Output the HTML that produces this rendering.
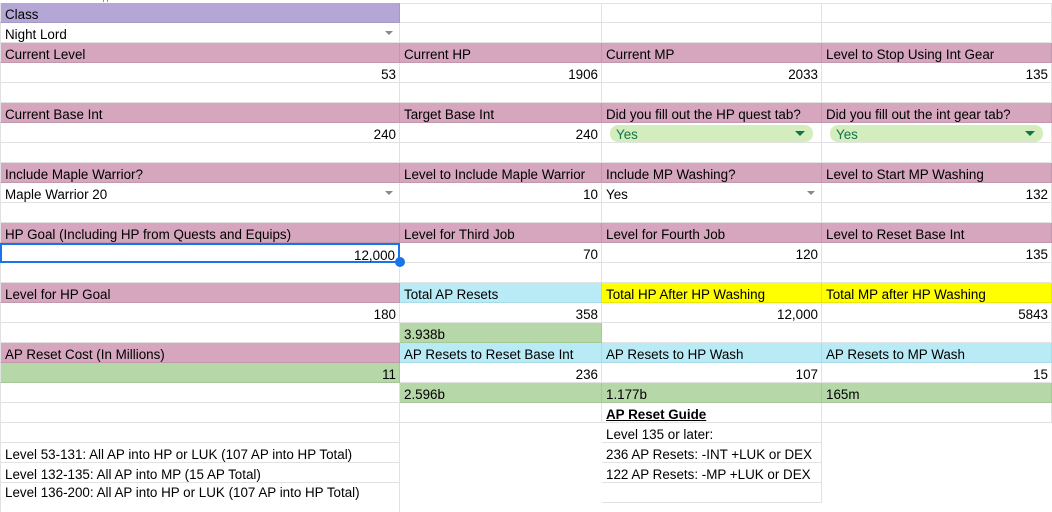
<!DOCTYPE html>
<html><head><meta charset="utf-8"><style>
html,body{margin:0;padding:0;background:#fff;}
body{width:1052px;height:512px;overflow:hidden;position:relative;font-family:"Liberation Sans",sans-serif;font-size:13.4px;color:#000;}
.c{position:absolute;box-sizing:border-box;border-right:1px solid #e2e2e2;border-bottom:1px solid #e2e2e2;height:20px;line-height:24px;padding:0 3px 0 4px;white-space:nowrap;overflow:visible;}
.r{text-align:right;}
.pk{background:#d5a6bd;border-color:#c397ac;}
.pu{background:#b4a7d6;border-color:#a699c8;}
.bl{background:#b9ebf7;border-color:#a7dbe7;}
.ye{background:#ffff00;border-color:#e8e800;}
.gr{background:#b6d7a8;border-color:#a5c897;}
.dd:after{content:"";position:absolute;right:6px;top:8px;border-left:4px solid transparent;border-right:4px solid transparent;border-top:4px solid #8a8a8a;}
.chip{position:absolute;left:8px;right:8px;top:2px;height:17px;border-radius:8px;background:#d4edbc;color:#11734b;line-height:20px;padding-left:6px;}
.chip:after{content:"";position:absolute;right:8px;top:6px;border-left:5px solid transparent;border-right:5px solid transparent;border-top:5px solid #11734b;}
</style></head><body>
<div style="position:absolute;left:0;top:0;width:1052px;height:3px;border-bottom:1px solid #e2e2e2"></div>
<div style="position:absolute;left:103px;top:0;width:3px;height:2px;border-left:1px solid #c77;border-right:1px solid #c77"></div>
<div id="g"></div>
<script>
var X=[0,400,602,822,1052],T=function(i){return 3+20*i;};
var cells=[
[0,['pu','Class'],'','',''],
[1,['dd','Night Lord'],'','',''],
[2,['pk','Current Level'],['pk','Current HP'],['pk','Current MP'],['pk','Level to Stop Using Int Gear']],
[3,['r','53'],['r','1906'],['r','2033'],['r','135']],
[4,'','','',''],
[5,['pk','Current Base Int'],['pk','Target Base Int'],['pk','Did you fill out the HP quest tab?'],['pk','Did you fill out the int gear tab?']],
[6,['r','240'],['r','240'],['chip','Yes'],['chip','Yes']],
[7,'','','',''],
[8,['pk','Include Maple Warrior?'],['pk','Level to Include Maple Warrior'],['pk','Include MP Washing?'],['pk','Level to Start MP Washing']],
[9,['dd','Maple Warrior 20'],['r','10'],['dd','Yes'],['r','132']],
[10,'','','',''],
[11,['pk','HP Goal (Including HP from Quests and Equips)'],['pk','Level for Third Job'],['pk','Level for Fourth Job'],['pk','Level to Reset Base Int']],
[12,['r sel','12,000'],['r','70'],['r','120'],['r','135']],
[13,'','','',''],
[14,['pk','Level for HP Goal'],['bl','Total AP Resets'],['ye','Total HP After HP Washing'],['ye','Total MP after HP Washing']],
[15,['r','180'],['r','358'],['r','12,000'],['r','5843']],
[16,'',['gr','3.938b'],'',''],
[17,['pk','AP Reset Cost (In Millions)'],['bl','AP Resets to Reset Base Int'],['bl','AP Resets to HP Wash'],['bl','AP Resets to MP Wash']],
[18,['gr r','11'],['r','236'],['r','107'],['r','15']],
[19,'',['gr','2.596b'],['gr','1.177b'],['gr','165m']],
[20,'','',['b','AP Reset Guide'],''],
[21,'',null,'Level 135 or later:',null],
[22,'Level 53-131: All AP into HP or LUK (107 AP into HP Total)',null,'236 AP Resets: -INT +LUK or DEX',null],
[23,'Level 132-135: All AP into MP (15 AP Total)',null,'122 AP Resets: -MP +LUK or DEX',null],
[24,'Level 136-200: All AP into HP or LUK (107 AP into HP Total)',null,'',null]
];
var h='';
cells.forEach(function(row){
 var i=row[0];
 for(var j=0;j<4;j++){
  var v=row[j+1]; if(v===null)continue;
  var cls='',txt='';
  if(typeof v==='string'){txt=v;}else{cls=v[0];txt=v[1];}
  var top=T(i),hgt=20,st='';
  if(i==21&&(j==1||j==3)){hgt=80;}
  if(i==24&&j==0){hgt=29;st='line-height:20px;border-bottom:none;';}
  var inner=txt;
  if(cls.indexOf('chip')>=0){inner='<span class="chip">'+txt+'</span>';cls=cls.replace('chip','');}
  if(cls.split(' ').indexOf('b')>=0){inner='<b style="text-decoration:underline">'+txt+'</b>';}
  if(j==0)st+='border-left:1px solid #e2e2e2;';
  if(cls.indexOf('sel')>=0){st+='border:2px solid #1a73e8;line-height:22px;';}
  h+='<div class="c '+cls+'" style="left:'+X[j]+'px;top:'+top+'px;width:'+(X[j+1]-X[j])+'px;height:'+hgt+'px;'+st+'">'+inner+'</div>';
 }
});
h+='<div style="position:absolute;left:395px;top:257px;width:10px;height:10px;border-radius:50%;background:#1a73e8;"></div>';
document.getElementById('g').innerHTML=h;
</script>
</body></html>
